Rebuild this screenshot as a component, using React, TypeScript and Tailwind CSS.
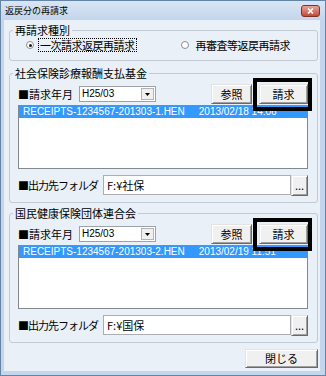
import React from "react";

const jp = "font-['Noto_Sans_CJK_JP','Liberation_Sans',sans-serif]";
const latin = "font-['Liberation_Sans','Noto_Sans_CJK_JP',sans-serif]";

const sections = [
  {
    title: "社会保険診療報酬支払基金",
    file: "RECEIPTS-1234567-201303-1.HEN",
    stamp: "2013/02/18 14:06",
    folder: "F:¥社保",
  },
  {
    title: "国民健康保険団体連合会",
    file: "RECEIPTS-1234567-201303-2.HEN",
    stamp: "2013/02/19 11:51",
    folder: "F:¥国保",
  },
];

function ClassicButton({
  children,
  className = "",
}: {
  children: React.ReactNode;
  className?: string;
}) {
  return (
    <div
      className={`flex items-center justify-center border border-t-[#e3e3e3] border-l-[#e3e3e3] border-r-[#696969] border-b-[#696969] bg-[#f0f0f0] text-[11px] leading-none text-black shadow-[inset_1px_1px_0_#ffffff,inset_-1px_-1px_0_#a0a0a0] ${className}`}
    >
      {children}
    </div>
  );
}

function Radio({ checked }: { checked?: boolean }) {
  return (
    <span className="flex size-[8px] shrink-0 items-center justify-center rounded-full border border-[#8e8f8f] bg-white">
      {checked && <span className="size-[3px] rounded-full bg-[#1f1f1f]" />}
    </span>
  );
}

function CloseBox() {
  return (
    <div className="flex h-[12px] w-[19px] items-center justify-center rounded-[3px] border border-[#7d3426] bg-gradient-to-b from-[#e6a596] to-[#c2483a]">
      <svg width="7" height="6" viewBox="0 0 7 6">
        <path d="M1 0.5 L6 5.5 M6 0.5 L1 5.5" stroke="#ffffff" strokeWidth="1.6" />
      </svg>
    </div>
  );
}

function Section({
  title,
  file,
  stamp,
  folder,
  className = "",
}: {
  title: string;
  file: string;
  stamp: string;
  folder: string;
  className?: string;
}) {
  return (
    <fieldset
      className={`rounded-[3px] border border-[#c2cad3] pb-[7px] pl-[8px] pr-[9px] pt-[4px] ${className}`}
    >
      <legend className="-ml-[5px] px-[2px] text-[11px] leading-[14px] text-black">
        {title}
      </legend>

      <div className="flex h-[20px] items-center">
        <span className="w-[61px] whitespace-nowrap text-[11px] leading-none text-black">■請求年月</span>
        <div className="flex h-[16px] w-[77px] items-center border border-[#9da2a8] bg-white pl-[2px] pr-[1px]">
          <span className={`flex-1 text-[10px] leading-none text-black ${latin}`}>H25/03</span>
          <div className="flex h-[12px] w-[13px] items-center justify-center border border-[#b4b4b4] bg-[#f0f0f0]">
            <svg width="5" height="3" viewBox="0 0 5 3">
              <path d="M0 0 H5 L2.5 3 Z" fill="#000000" />
            </svg>
          </div>
        </div>
        <ClassicButton className="ml-auto h-[20px] w-[41px]">参照</ClassicButton>
        <div className="relative ml-[7px]">
          <ClassicButton className="h-[20px] w-[49px]">請求</ClassicButton>
          <span className="pointer-events-none absolute -bottom-[7px] -left-[6px] -right-[4px] -top-[6px] z-10 border-4 border-black" />
        </div>
      </div>

      <div className="mt-[1px] h-[64px] border border-[#828790] bg-white">
        <div
          className={`flex h-[12px] items-center whitespace-pre bg-[#3399ff] pl-[4px] text-[10px] leading-none text-white ${latin}`}
        >
          <span>{file}</span>
          <span className="ml-[14px]">{stamp}</span>
        </div>
      </div>

      <div className="mt-[6px] flex h-[20px] items-center">
        <span className="w-[85px] whitespace-nowrap text-[11px] leading-none tracking-[-1px] text-black">
          ■出力先フォルダ
        </span>
        <div className="flex h-[20px] flex-1 items-center border border-[#abadb3] bg-white pl-[3px] text-[11px] leading-none text-black">
          {folder}
        </div>
        <ClassicButton className="h-[21px] w-[17px] text-[8px] text-[#555]">...</ClassicButton>
      </div>
    </fieldset>
  );
}

export default function App() {
  return (
    <div
      className={`flex h-[376px] w-[326px] flex-col border border-[#6585a8] bg-[#c3d6ec] ${jp}`}
    >
      <div className="flex h-[19px] shrink-0 items-center justify-between bg-gradient-to-b from-[#d8e5f3] to-[#c3d6ec] pl-[4px] pr-[5px]">
        <span className="text-[9px] leading-none text-black">返戻分の再請求</span>
        <CloseBox />
      </div>

      <div className="flex flex-1 pb-[4px] pl-[3px] pr-[5px]">
        <div className="flex flex-1 flex-col bg-[#e9f0f8] pl-[5px] pr-[2px] pt-[3px]">
          <fieldset className="rounded-[3px] border border-[#c2cad3] pb-[8px] pl-[8px] pr-[9px] pt-[1px]">
            <legend className="-ml-[5px] px-[2px] text-[11px] leading-[14px] text-black">
              再請求種別
            </legend>
            <div className="flex h-[14px] items-center">
              <span className="ml-[8px]">
                <Radio checked />
              </span>
              <span className="ml-[4px] whitespace-nowrap border border-dotted border-black px-[1px] text-[11px] leading-[12px] tracking-[-0.5px] text-black">
                一次請求返戻再請求
              </span>
              <span className="ml-[44px]">
                <Radio />
              </span>
              <span className="ml-[5px] whitespace-nowrap border border-transparent px-[1px] text-[11px] leading-[12px] tracking-[-0.5px] text-black">
                再審査等返戻再請求
              </span>
            </div>
          </fieldset>

          {sections.map((s, i) => (
            <Section
              key={s.title}
              {...s}
              className={i === 0 ? "mt-[5px]" : "mt-[3px]"}
            />
          ))}

          <div className="mt-[6px] flex justify-end">
            <ClassicButton className="h-[19px] w-[73px]">閉じる</ClassicButton>
          </div>
        </div>
      </div>
    </div>
  );
}
